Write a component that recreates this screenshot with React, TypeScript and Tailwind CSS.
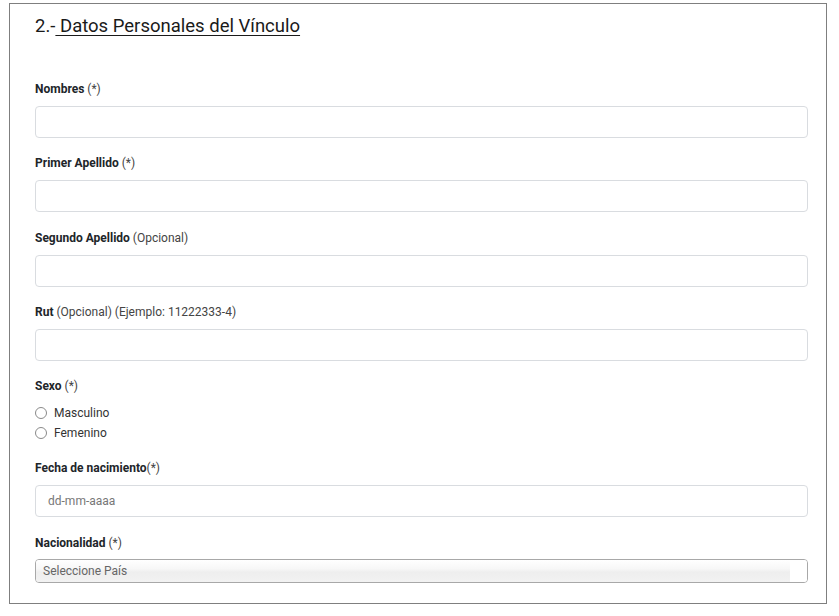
import React from "react";

const font = { fontFamily: "Roboto, 'Liberation Sans', sans-serif" };

function Label({ bold, rest }: { bold: string; rest?: string }) {
  return (
    <div className="h-[18px] leading-[20px] text-[12px] text-[#212529]">
      <span className="font-bold">{bold}</span>
      {rest ? <span className="font-normal text-[#444]">{rest}</span> : null}
    </div>
  );
}

function Input({ placeholder }: { placeholder?: string }) {
  return (
    <div className="h-[32px] mt-[9px] rounded-[4px] border border-[#d9dce0] bg-white flex items-center px-[12px] text-[12px] text-[#777]">
      {placeholder}
    </div>
  );
}

function Radio({ label }: { label: string }) {
  return (
    <div className="h-[20px] flex items-center gap-[7px] text-[12px] text-[#333]">
      <span className="w-[12px] h-[12px] rounded-full border border-[#8a8a8a] bg-white" />
      <span>{label}</span>
    </div>
  );
}

export default function App() {
  return (
    <div className="bg-white w-[839px] h-[616px] pl-[9px] pt-[3px]" style={font}>
      <div className="w-[818px] h-[601px] border border-[#7f7f7f] pl-[25px] pr-[18px] pt-[11px]">
        <div className="h-[22px] leading-[22px] text-[18.5px] font-normal text-[#1a1a1a]">
          2.-<span className="underline underline-offset-[3px] decoration-1">{" "}Datos Personales del Vínculo</span>
        </div>
        <div className="mt-[42px]">
          <Label bold="Nombres" rest=" (*)" />
          <Input />
        </div>
        <div className="mt-[15px]">
          <Label bold="Primer Apellido" rest=" (*)" />
          <Input />
        </div>
        <div className="mt-[16px]">
          <Label bold="Segundo Apellido" rest=" (Opcional)" />
          <Input />
        </div>
        <div className="mt-[15px]">
          <Label bold="Rut" rest=" (Opcional) (Ejemplo: 11222333-4)" />
          <Input />
        </div>
        <div className="mt-[15px]">
          <Label bold="Sexo" rest=" (*)" />
          <div className="mt-[9px]">
            <Radio label="Masculino" />
            <Radio label="Femenino" />
          </div>
        </div>
        <div className="mt-[15px]">
          <Label bold="Fecha de nacimiento" rest="(*)" />
          <Input placeholder="dd-mm-aaaa" />
        </div>
        <div className="mt-[16px]">
          <Label bold="Nacionalidad" rest=" (*)" />
          <div className="mt-[8px] h-[24px] rounded-[4px] border border-[#a8a8a8] bg-white flex overflow-hidden">
            <div className="flex-1 flex items-center pl-[7px] text-[12px] text-[#666] bg-[linear-gradient(#ffffff_0%,#f7f7f7_40%,#eeeeee_55%,#f2f2f2_100%)]">
              Seleccione País
            </div>
            <div className="w-[17px] bg-white" />
          </div>
        </div>
      </div>
    </div>
  );
}
